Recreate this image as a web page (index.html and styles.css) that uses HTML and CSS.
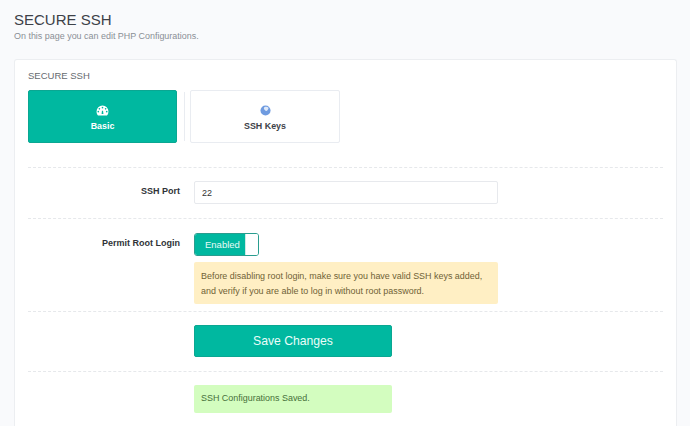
FILE: index.html
```html
<!DOCTYPE html>
<html lang="en">
<head>
<meta charset="utf-8">
<title>SECURE SSH</title>
<link rel="stylesheet" href="styles.css">
</head>
<body>
<header class="page-head">
  <h1 class="page-title">SECURE SSH</h1>
  <p class="page-sub">On this page you can edit PHP Configurations.</p>
</header>
<main class="card">
  <h2 class="card-title">SECURE SSH</h2>
  <nav class="tabs">
    <a class="tab tab-active">
      <svg class="tab-icon" viewBox="0 0 14 12" width="13" height="11"><path fill="#fff" fill-rule="evenodd" d="M7 .5A6.5 6.5 0 0 0 .5 7c0 1.7.6 3.2 1.6 4.4h9.8A6.5 6.5 0 0 0 13.500 7 6.500 6.500 0 0 0 7 .5ZM7 2a.9.9 0 1 1 0 1.800A.9.9 0 0 1 7 2ZM3.600 3.300a.9.9 0 1 1 0 1.800.9.9 0 0 1 0-1.800ZM10.400 3.300a.9.900 0 1 1 0 1.800.9.900 0 0 1 0-1.800ZM2.400 6.400a.9.900 0 1 1 0 1.800.9.900 0 0 1 0-1.800ZM11.600 6.400a.9.900 0 1 1 0 1.800.9.900 0 0 1 0-1.800ZM6.400 6.200h1.200L8 9.800H6Z"/></svg>
      <span>Basic</span>
    </a>
    <span class="tab-sep"></span>
    <a class="tab">
      <svg class="tab-icon" viewBox="0 0 12 12" width="11" height="11"><circle cx="6" cy="6" r="5.500" fill="#6f9be0"/><path fill="#dfe9f8" d="M5 2.200c1.500-.6 3.300-.3 4 .5.500.7.200 1.500-.3 2.300-.5.900-1.100 1.600-1.900 1.500C5.800 6.400 5 5.600 4.500 4.700 4.100 3.800 4.200 2.600 5 2.200Z"/></svg>
      <span>SSH Keys</span>
    </a>
  </nav>
  <section class="row row-port">
    <label class="row-label">SSH Port</label>
    <div class="row-body">
      <input class="field" type="text" value="22">
    </div>
  </section>
  <section class="row row-root">
    <label class="row-label">Permit Root Login</label>
    <div class="row-body">
      <div class="toggle"><span class="toggle-on">Enabled</span><span class="toggle-knob"></span></div>
      <div class="alert alert-warn">Before disabling root login, make sure you have valid SSH keys added, and verify if you are able to log in without root password.</div>
    </div>
  </section>
  <section class="row row-save">
    <span class="row-label"></span>
    <div class="row-body narrow">
      <button class="save" type="button">Save Changes</button>
    </div>
  </section>
  <section class="row row-msg">
    <span class="row-label"></span>
    <div class="row-body narrow">
      <div class="alert alert-ok">SSH Configurations Saved.</div>
    </div>
  </section>
</main>
</body>
</html>
```
FILE: styles.css
```css
* { box-sizing: border-box; }
body {
  margin: 0;
  height: 426px;
  overflow: hidden;
  background: #f9fafc;
  font-family: "Liberation Sans", Arial, sans-serif;
  color: #333;
}
.page-head { padding: 10px 14px 0; height: 59px; }
.page-title {
  margin: 0;
  font-size: 15px;
  line-height: 20px;
  font-weight: 400;
  color: #3d4148;
}
.page-sub {
  margin: 1px 0 0;
  font-size: 8.950px;
  line-height: 11px;
  color: #8a8f96;
}
.card {
  margin: 0 13px 0 14px;
  height: 367px;
  padding: 9px 13px 0;
  background: #fff;
  border: 1px solid #eceef1;
  border-bottom: 0;
  border-radius: 3px 3px 0 0;
}
.card-title {
  margin: 0;
  height: 21px;
  font-size: 9.500px;
  line-height: 13px;
  font-weight: 400;
  color: #666b70;
}
.tabs { display: flex; align-items: stretch; height: 53px; }
.tab {
  display: flex;
  flex-direction: column;
  align-items: center;
  justify-content: flex-start;
  gap: 4px;
  width: 150px;
  padding-top: 14px;
  background: #fff;
  border: 1px solid #e9ecf1;
  border-radius: 2px;
  font-size: 8.900px;
  line-height: 12px;
  font-weight: 700;
  color: #3d4148;
}
.tab-active {
  width: 149px;
  background: #00b8a0;
  border-color: #0aa792;
  color: #fff;
}
.tab-icon { display: block; }
.tab-sep { width: 1px; margin: 2px 5px 2px 7px; background: #e9ecf1; }
.row { display: flex; border-top: 1px dashed #e6e8eb; }
.row-port { margin-top: 24px; height: 51px; padding-top: 13px; }
.row-root { height: 93px; padding-top: 14px; }
.row-save { height: 60px; padding-top: 13px; }
.row-msg { height: 55px; padding-top: 13px; }
.row-label {
  flex: none;
  width: 152px;
  text-align: right;
  font-size: 9px;
  line-height: 21px;
  font-weight: 700;
  color: #2f3338;
}
.row-body { margin-left: 14px; width: 304px; }
.row-body.narrow { width: 198px; }
.field {
  display: block;
  width: 100%;
  height: 23px;
  padding: 0 7px;
  border: 1px solid #e7e9ed;
  border-radius: 2px;
  background: #fff;
  font: 9px "Liberation Sans", Arial, sans-serif;
  color: #333;
}
.toggle {
  display: flex;
  width: 65px;
  height: 23px;
  border: 1px solid #2a9d8f;
  border-radius: 3px;
  overflow: hidden;
}
.toggle-on {
  flex: 1;
  background: #00b8a0;
  color: #e6fbf7;
  font-size: 9.500px;
  line-height: 21px;
  padding-left: 10px;
}
.toggle-knob { width: 13px; background: #fff; border-left: 1px solid #cfe9e5; }
.alert {
  border-radius: 2px;
  font-size: 8.950px;
}
.alert-warn {
  margin-top: 6px;
  height: 42px;
  padding: 7px 7px;
  line-height: 15px;
  background: #ffefc4;
  color: #6f6236;
}
.alert-ok {
  height: 28px;
  padding: 0 7px;
  line-height: 27px;
  background: #d3fdbf;
  color: #47703a;
}
.save {
  display: block;
  width: 100%;
  height: 32px;
  padding: 0;
  background: #00b8a0;
  border: 1px solid #0aa792;
  border-radius: 2px;
  color: #eafdf9;
  font: 12.200px "Liberation Sans", Arial, sans-serif;
}
```
